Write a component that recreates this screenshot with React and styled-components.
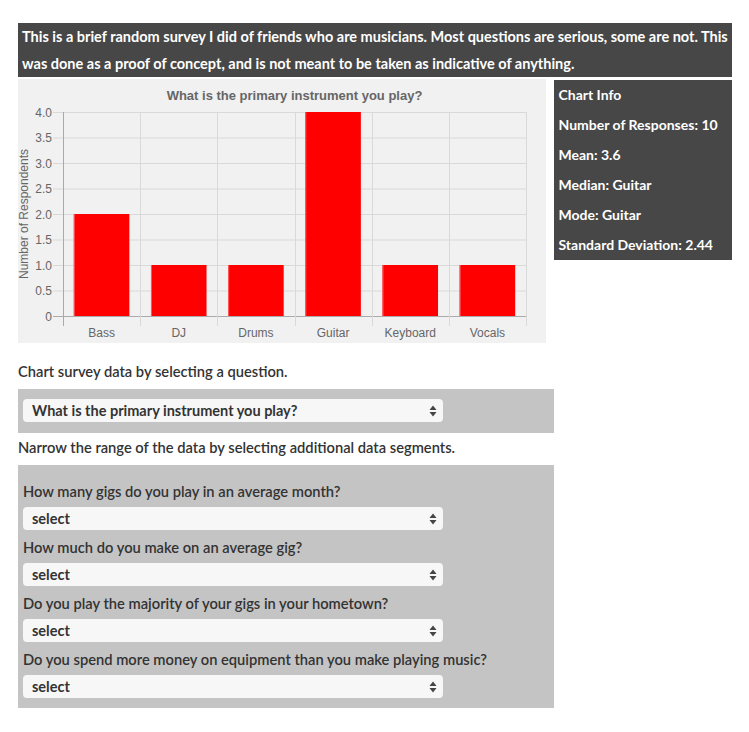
import React from "react";
import styled, { createGlobalStyle } from "styled-components";

const QUESTIONS = [
  "How many gigs do you play in an average month?",
  "How much do you make on an average gig?",
  "Do you play the majority of your gigs in your hometown?",
  "Do you spend more money on equipment than you make playing music?",
];

const INFO = [
  "Chart Info",
  "Number of Responses: 10",
  "Mean: 3.6",
  "Median: Guitar",
  "Mode: Guitar",
  "Standard Deviation: 2.44",
];

const BARS = [
  { label: "Bass", value: 2 },
  { label: "DJ", value: 1 },
  { label: "Drums", value: 1 },
  { label: "Guitar", value: 4 },
  { label: "Keyboard", value: 1 },
  { label: "Vocals", value: 1 },
];

const GlobalStyle = createGlobalStyle`
  body {
    margin: 0;
    background: #fff;
    font-family: Lato, "Open Sans", sans-serif;
    color: #333;
  }
`;

// chart geometry, in svg coords
const PLOT = { left: 45, right: 508, top: 33, bottom: 237 };
const TICKS = [0, 0.5, 1, 1.5, 2, 2.5, 3, 3.5, 4];
const CHART_FONT = "'Liberation Sans', Arial, sans-serif";

const BarChart = () => {
  const colW = (PLOT.right - PLOT.left) / BARS.length;
  const y = v => PLOT.bottom - (v / 4) * (PLOT.bottom - PLOT.top);
  const barW = colW * 0.72;

  return (
    <svg width="528" height="264" viewBox="0 0 528 264">
      <text
        x={(PLOT.left + PLOT.right) / 2}
        y="21"
        textAnchor="middle"
        fontFamily={CHART_FONT}
        fontSize="13"
        fontWeight="bold"
        fill="#666"
      >
        What is the primary instrument you play?
      </text>
      <text
        transform={`translate(10 ${(PLOT.top + PLOT.bottom) / 2}) rotate(-90)`}
        textAnchor="middle"
        fontFamily={CHART_FONT}
        fontSize="12"
        fill="#666"
      >
        Number of Respondents
      </text>

      {TICKS.map(t => (
        <g key={t}>
          <line
            x1={PLOT.left - 10}
            x2={PLOT.right}
            y1={y(t) + 0.5}
            y2={y(t) + 0.5}
            stroke={t === 0 ? "#aaa" : "#d9d9d9"}
          />
          <text
            x={PLOT.left - 11}
            y={y(t) + 4.5}
            textAnchor="end"
            fontFamily={CHART_FONT}
            fontSize="12"
            fill="#666"
          >
            {t === 0 ? "0" : t.toFixed(1)}
          </text>
        </g>
      ))}

      {BARS.map((b, i) => {
        const x0 = PLOT.left + i * colW;
        const bx = x0 + (colW - barW) / 2;
        return (
          <g key={b.label}>
            <line
              x1={Math.round(x0) + 0.5}
              x2={Math.round(x0) + 0.5}
              y1={PLOT.top}
              y2={PLOT.bottom + 10}
              stroke={i === 0 ? "#aaa" : "#d9d9d9"}
            />
            <rect
              x={bx}
              y={y(b.value)}
              width={barW}
              height={PLOT.bottom - y(b.value)}
              fill="#ff0000"
            />
            <rect
              x={bx}
              y={y(b.value)}
              width="1"
              height={PLOT.bottom - y(b.value)}
              fill="#ff5a5a"
            />
            <text
              x={x0 + colW / 2}
              y="258"
              textAnchor="middle"
              fontFamily={CHART_FONT}
              fontSize="12"
              fill="#666"
            >
              {b.label}
            </text>
          </g>
        );
      })}
      <line
        x1={PLOT.right + 0.5}
        x2={PLOT.right + 0.5}
        y1={PLOT.top}
        y2={PLOT.bottom + 10}
        stroke="#d9d9d9"
      />
    </svg>
  );
};

const SelectArrows = () => (
  <ArrowIcon width="8" height="12" viewBox="0 0 8 12">
    <path d="M4 0.5 L7.5 5 H0.5 Z" fill="#444" />
    <path d="M4 11.5 L7.5 7 H0.5 Z" fill="#444" />
  </ArrowIcon>
);

const Dropdown = ({ value }) => (
  <SelectWrap>
    <Select defaultValue={value}>
      <option>{value}</option>
    </Select>
    <SelectArrows />
  </SelectWrap>
);

const App = () => (
  <>
    <GlobalStyle />
    <Page>
      <Intro>
        This is a brief random survey I did of friends who are musicians. Most
        questions are serious, some are not. This was done as a proof of
        concept, and is not meant to be taken as indicative of anything.
      </Intro>

      <ChartRow>
        <ChartCol>
          <ChartBox>
            <BarChart />
          </ChartBox>
        </ChartCol>
        <InfoBox>
          {INFO.map(line => (
            <InfoLine key={line}>{line}</InfoLine>
          ))}
        </InfoBox>
      </ChartRow>

      <Caption $top={16}>Chart survey data by selecting a question.</Caption>
      <Panel $pad="10px 5px 11px">
        <Dropdown value="What is the primary instrument you play?" />
      </Panel>

      <Caption $top={2}>
        Narrow the range of the data by selecting additional data segments.
      </Caption>
      <Panel $pad="14px 5px 10px">
        {QUESTIONS.map(q => (
          <Segment key={q}>
            <Label>{q}</Label>
            <Dropdown value="select" />
          </Segment>
        ))}
      </Panel>
    </Page>
  </>
);

export default App;

// Styled Components

const Page = styled.div`
  padding: 23px 17px 24px 18px;
`;

const Intro = styled.div`
  background: #474747;
  color: #fff;
  font-weight: 700;
  font-size: 14.5px;
  line-height: 27px;
  padding: 0 4px;
`;

const ChartRow = styled.div`
  display: flex;
  margin-top: 2px;
`;

const ChartCol = styled.div`
  width: 75%;
`;

const ChartBox = styled.div`
  width: 528px;
  height: 264px;
  background: #f1f1f1;

  svg {
    display: block;
  }
`;

const InfoBox = styled.div`
  width: 25%;
  align-self: flex-start;
  margin-top: 1px;
  background: #474747;
  color: #fff;
  padding: 0 5px;
  box-sizing: border-box;
`;

const InfoLine = styled.div`
  font-weight: 700;
  font-size: 14px;
  line-height: 30px;
  white-space: nowrap;
`;

const Caption = styled.p`
  margin: ${p => p.$top}px 0 6px;
  font-size: 14.7px;
  font-weight: 600;
  line-height: 24px;
`;

const Panel = styled.div`
  width: 75%;
  background: #c4c4c4;
  padding: ${p => p.$pad};
  box-sizing: border-box;
`;

const Segment = styled.div`
  & + & {
    margin-top: 5px;
  }
`;

const Label = styled.div`
  font-size: 14.7px;
  font-weight: 600;
  line-height: 24px;
  margin-bottom: 4px;
`;

const SelectWrap = styled.div`
  position: relative;
  width: 420px;
`;

const Select = styled.select`
  display: block;
  width: 100%;
  height: 23px;
  appearance: none;
  border: none;
  border-radius: 4px;
  background: #f7f7f7;
  padding: 0 24px 0 9px;
  font-family: Lato, "Open Sans", sans-serif;
  font-size: 14.5px;
  font-weight: 700;
  color: #333;
`;

const ArrowIcon = styled.svg`
  position: absolute;
  right: 6px;
  top: 6px;
  pointer-events: none;
`;
